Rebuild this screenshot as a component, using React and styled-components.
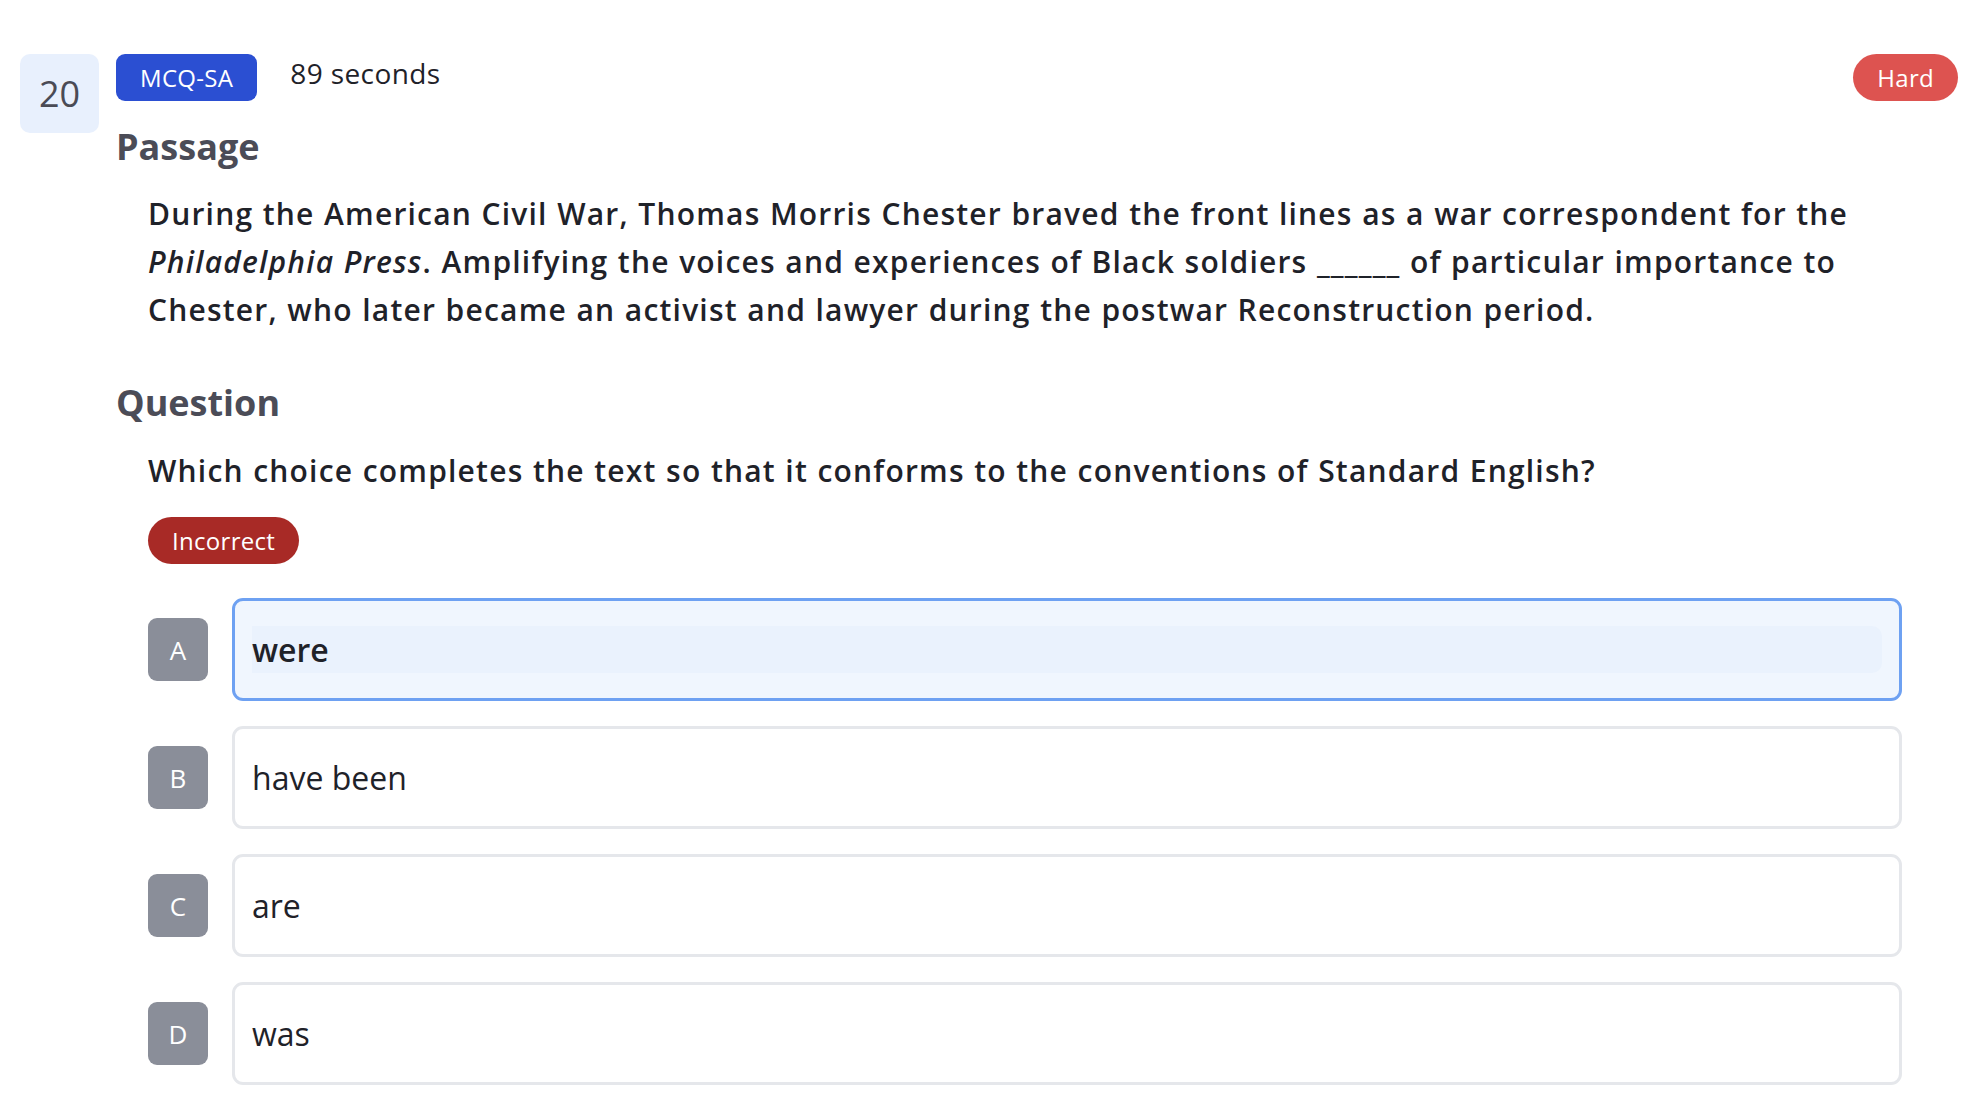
import React from "react";
import styled, { createGlobalStyle } from "styled-components";

const GlobalStyle = createGlobalStyle`
  body {
    margin: 0;
    background: #ffffff;
    font-family: "Open Sans", "Noto Sans", sans-serif;
    color: #1f2229;
  }
`;

const Page = styled.div`
  display: flex;
  align-items: flex-start;
  gap: 17px;
  padding: 54px 26px 0 20px;
`;

const NumberBox = styled.div`
  width: 79px;
  height: 79px;
  flex-shrink: 0;
  display: flex;
  align-items: center;
  justify-content: center;
  background: #e8f0fd;
  border-radius: 10px;
  font-size: 36px;
  color: #4a4b55;
`;

/* main column */
const Content = styled.div`
  flex: 1;
  display: flex;
  flex-direction: column;
`;

const Header = styled.div`
  display: flex;
  align-items: flex-start;
  gap: 33px;
`;

const Badge = styled.span`
  display: inline-flex;
  align-items: center;
  align-self: flex-start;
  height: 47px;
  padding: 0 24px;
  margin-top: ${(p) => p.$top || "0"};
  font-size: 24px;
  letter-spacing: 0.3px;
  color: #ffffff;
  background: ${(p) => p.$bg};
  border-radius: ${(p) => (p.$pill ? "24px" : "9px")};
  white-space: nowrap;
`;

const Time = styled.span`
  font-size: 28px;
  line-height: 38px;
  letter-spacing: 0.4px;
  color: #1f2229;
`;

const Spacer = styled.div`
  flex: 1;
`;

const SectionTitle = styled.h2`
  margin: ${(p) => p.$top} 0 0;
  font-size: 36px;
  line-height: 44px;
  font-weight: 700;
  color: #4b4c57;
`;

const Body = styled.div`
  display: flex;
  flex-direction: column;
  padding: 0 56px 0 32px;
`;

const Text = styled.p`
  margin: ${(p) => p.$top} 0 0;
  font-size: 30px;
  line-height: 48px;
  font-weight: 600;
  letter-spacing: 1.2px;
  word-spacing: 0.5px;
  color: #1f2229;
`;

const Options = styled.div`
  display: flex;
  flex-direction: column;
  gap: 25px;
  margin-top: 34px;
`;

const OptionRow = styled.div`
  display: flex;
  align-items: center;
  gap: 24px;
`;

const Letter = styled.div`
  width: 60px;
  height: 63px;
  flex-shrink: 0;
  display: flex;
  align-items: center;
  justify-content: center;
  background: #8a8e99;
  border-radius: 9px;
  color: #ffffff;
  font-size: 26px;
`;

const Choice = styled.div`
  flex: 1;
  padding: 25px 17px;
  border: 3px solid ${(p) => (p.$selected ? "#6ea1f2" : "#e5e7eb")};
  background: ${(p) => (p.$selected ? "#f0f6fe" : "#ffffff")};
  border-radius: 11px;
`;

const ChoiceText = styled.div`
  font-size: 32px;
  line-height: 47px;
  font-weight: ${(p) => (p.$selected ? 600 : 400)};
  color: #1f2229;
  background: ${(p) => (p.$selected ? "#eaf2fd" : "transparent")};
  border-radius: 0 10px 10px 0;
`;

const choices = [
  { key: "A", text: "were", selected: true },
  { key: "B", text: "have been" },
  { key: "C", text: "are" },
  { key: "D", text: "was" },
];

export default function App() {
  return (
    <>
      <GlobalStyle />
      <Page>
        <NumberBox>20</NumberBox>
        <Content>
          <Header>
            <Badge $bg="#2b4fd2">MCQ-SA</Badge>
            <Time>89 seconds</Time>
            <Spacer />
            <Badge $bg="#dd5350" $pill>
              Hard
            </Badge>
          </Header>

          <SectionTitle $top="24px">Passage</SectionTitle>
          <Body>
            <Text $top="21px">
              During the American Civil War, Thomas Morris Chester braved the front lines as a war
              correspondent for the <em>Philadelphia Press</em>. Amplifying the voices and experiences
              of Black soldiers ______ of particular importance to Chester, who later became an
              activist and lawyer during the postwar Reconstruction period.
            </Text>
          </Body>

          <SectionTitle $top="47px">Question</SectionTitle>
          <Body>
            <Text $top="22px">
              Which choice completes the text so that it conforms to the conventions of Standard
              English?
            </Text>
            <Badge $bg="#a82a26" $pill $top="22px">
              Incorrect
            </Badge>
            <Options>
              {choices.map((c) => (
                <OptionRow key={c.key}>
                  <Letter>{c.key}</Letter>
                  <Choice $selected={c.selected}>
                    <ChoiceText $selected={c.selected}>{c.text}</ChoiceText>
                  </Choice>
                </OptionRow>
              ))}
            </Options>
          </Body>
        </Content>
      </Page>
    </>
  );
}
